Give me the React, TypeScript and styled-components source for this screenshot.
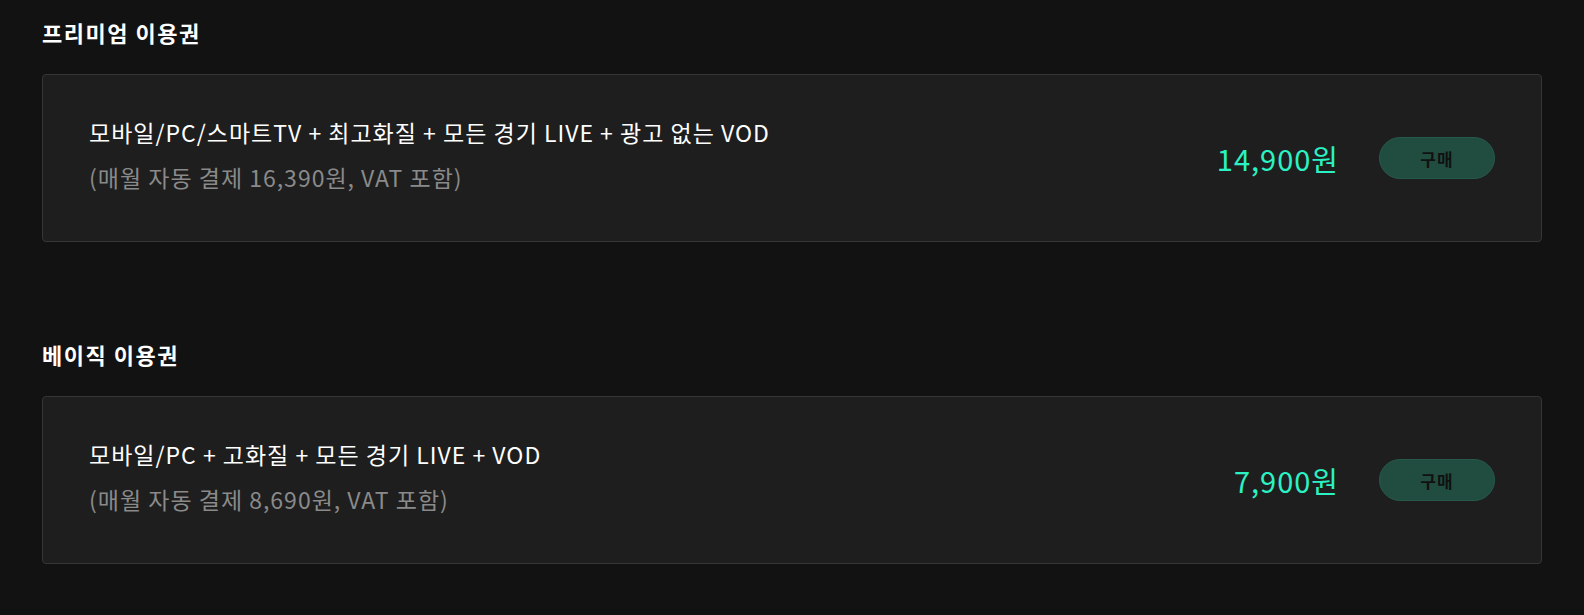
import { JSX } from 'react';
import styled, { createGlobalStyle } from 'styled-components';

const GlobalStyle = createGlobalStyle`
  html, body {
    margin: 0;
    padding: 0;
    background: #121212;
  }
  body {
    font-family: 'Noto Sans CJK KR', 'Noto Sans', sans-serif;
    color: #fff;
  }
`;

const Page = styled.div`
  width: 1500px;
  padding: 17px 42px 40px;
  display: flex;
  flex-direction: column;
  gap: 97px;
`;

const Section = styled.section`
  display: flex;
  flex-direction: column;
  gap: 27px;
`;

const SectionTitle = styled.h2`
  margin: 0;
  font-size: 22px;
  font-weight: 700;
  line-height: 30px;
  letter-spacing: 1.5px;
  color: #fff;
`;

const Card = styled.div`
  box-sizing: border-box;
  height: 168px;
  padding: 0 46px;
  display: flex;
  align-items: center;
  justify-content: space-between;
  background: #1e1e1e;
  border: 1px solid #363636;
  border-radius: 4px;
`;

const Info = styled.div`
  display: flex;
  flex-direction: column;
  gap: 13px;
  margin-top: -8px;
`;

const Desc = styled.div`
  font-size: 23px;
  line-height: 32px;
  letter-spacing: 1px;
  color: #fff;
`;

const Note = styled.div`
  font-size: 23px;
  line-height: 32px;
  letter-spacing: 1px;
  color: #8a8a8a;
`;

const Buy = styled.div`
  display: flex;
  align-items: center;
  gap: 40px;
`;

const Price = styled.span`
  font-size: 29px;
  line-height: 36px;
  letter-spacing: 1px;
  color: #2bf2c4;
`;

const BuyButton = styled.button`
  width: 116px;
  height: 42px;
  border-radius: 21px;
  border: 1px solid #26594b;
  background: #214d41;
  color: #111;
  font-family: inherit;
  font-size: 17px;
  font-weight: 700;
  letter-spacing: 1px;
  cursor: pointer;
`;

type Plan = { title: string; desc: string; note: string; price: string };

const plans: Plan[] = [
  {
    title: '프리미엄 이용권',
    desc: '모바일/PC/스마트TV + 최고화질 + 모든 경기 LIVE + 광고 없는 VOD',
    note: '(매월 자동 결제 16,390원, VAT 포함)',
    price: '14,900원',
  },
  {
    title: '베이직 이용권',
    desc: '모바일/PC + 고화질 + 모든 경기 LIVE + VOD',
    note: '(매월 자동 결제 8,690원, VAT 포함)',
    price: '7,900원',
  },
];

const App = (): JSX.Element => {
  return (
    <>
      <GlobalStyle />
      <Page>
        {plans.map((p) => (
          <Section key={p.title}>
            <SectionTitle>{p.title}</SectionTitle>
            <Card>
              <Info>
                <Desc>{p.desc}</Desc>
                <Note>{p.note}</Note>
              </Info>
              <Buy>
                <Price>{p.price}</Price>
                <BuyButton>구매</BuyButton>
              </Buy>
            </Card>
          </Section>
        ))}
      </Page>
    </>
  );
};

export default App;
